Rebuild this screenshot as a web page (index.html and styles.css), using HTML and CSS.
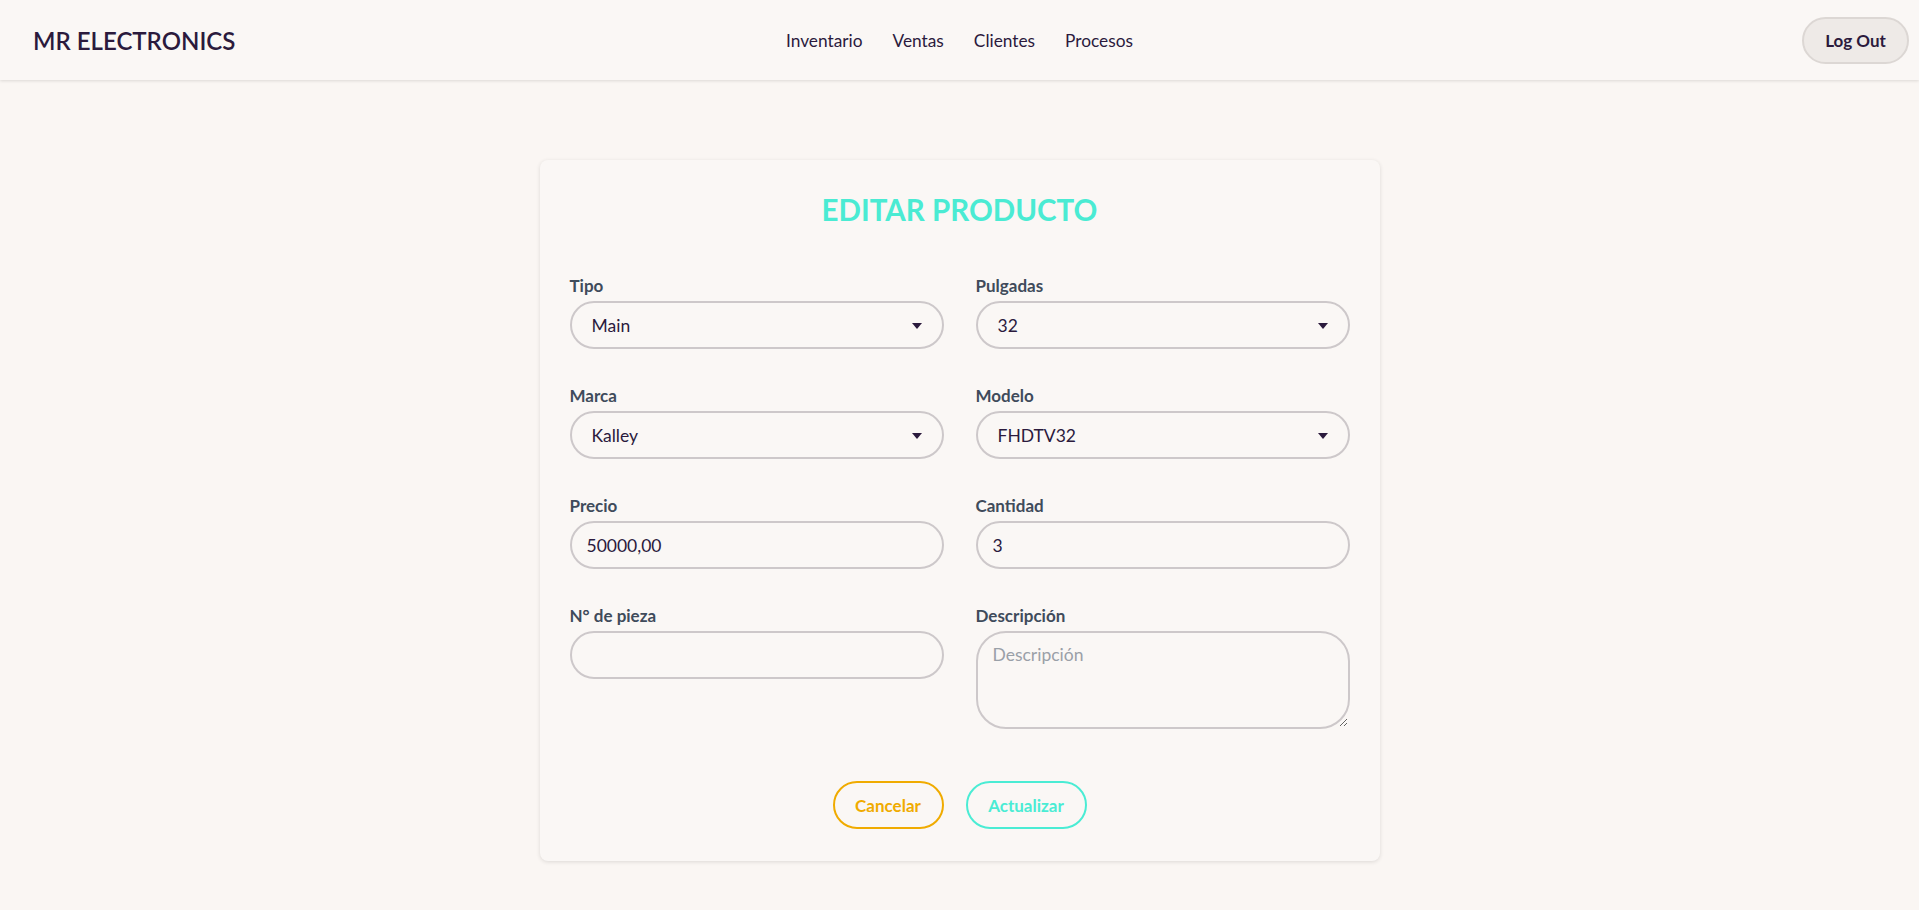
FILE: index.html
```html
<!DOCTYPE html>
<html lang="es">
<head>
<meta charset="utf-8">
<title>MR Electronics - Editar producto</title>
<link rel="stylesheet" href="styles.css">
</head>
<body>
<header class="navbar">
  <div class="brand">MR ELECTRONICS</div>
  <nav class="nav-links">
    <a href="#">Inventario</a>
    <a href="#">Ventas</a>
    <a href="#">Clientes</a>
    <a href="#">Procesos</a>
  </nav>
  <div class="nav-right"><button class="logout">Log Out</button></div>
</header>
<main class="page">
  <section class="card">
    <h1 class="title">EDITAR PRODUCTO</h1>
    <form class="form-grid">
      <div class="field">
        <label class="label">Tipo</label>
        <div class="select-wrap">
          <select class="control select"><option>Main</option></select>
          <svg class="caret" width="10" height="6" viewBox="0 0 10 6"><path d="M0 0h10L5 6z"/></svg>
        </div>
      </div>
      <div class="field">
        <label class="label">Pulgadas</label>
        <div class="select-wrap">
          <select class="control select"><option>32</option></select>
          <svg class="caret" width="10" height="6" viewBox="0 0 10 6"><path d="M0 0h10L5 6z"/></svg>
        </div>
      </div>
      <div class="field">
        <label class="label">Marca</label>
        <div class="select-wrap">
          <select class="control select"><option>Kalley</option></select>
          <svg class="caret" width="10" height="6" viewBox="0 0 10 6"><path d="M0 0h10L5 6z"/></svg>
        </div>
      </div>
      <div class="field">
        <label class="label">Modelo</label>
        <div class="select-wrap">
          <select class="control select"><option>FHDTV32</option></select>
          <svg class="caret" width="10" height="6" viewBox="0 0 10 6"><path d="M0 0h10L5 6z"/></svg>
        </div>
      </div>
      <div class="field">
        <label class="label">Precio</label>
        <input class="control" type="text" value="50000,00">
      </div>
      <div class="field">
        <label class="label">Cantidad</label>
        <input class="control" type="text" value="3">
      </div>
      <div class="field">
        <label class="label">N° de pieza</label>
        <input class="control" type="text" value="">
      </div>
      <div class="field">
        <label class="label">Descripción</label>
        <textarea class="control textarea" placeholder="Descripción"></textarea>
      </div>
    </form>
    <div class="actions">
      <button class="btn btn-cancel">Cancelar</button>
      <button class="btn btn-update">Actualizar</button>
    </div>
  </section>
</main>
</body>
</html>
```
FILE: styles.css
```css
* { box-sizing: border-box; }
html, body { margin: 0; padding: 0; }
body {
  background: #faf6f3;
  font-family: Lato, "Noto Sans", sans-serif;
  color: #2b1a3d;
  height: 910px;
  overflow: hidden;
}
.navbar {
  height: 80px;
  display: grid;
  grid-template-columns: 1fr auto 1fr;
  align-items: center;
  padding: 0 10px;
  background: #faf7f5;
  box-shadow: 0 1px 3px rgba(0,0,0,0.12);
  position: relative;
}
.brand {
  padding-left: 23px;
  font-size: 24px;
  font-weight: 600;
  color: #2b1a3d;
}
.nav-links {
  display: flex;
  gap: 30px;
}
.nav-links a {
  font-size: 17.3px;
  color: #2b1a3d;
  text-decoration: none;
}
.nav-right { display: flex; justify-content: flex-end; }
.logout {
  width: 107px;
  height: 47px;
  border-radius: 24px;
  background: #eeeae7;
  border: 2px solid #dcd7d4;
  font-family: inherit;
  font-size: 17px;
  font-weight: 700;
  color: #2b1a3d;
  cursor: pointer;
}
.page {
  display: flex;
  justify-content: center;
  padding-top: 80px;
}
.card {
  width: 840px;
  background: #faf7f5;
  border-radius: 8px;
  box-shadow: 0 1px 4px rgba(0,0,0,0.12);
  padding: 30px 30px 32px;
}
.title {
  margin: 2px 0 0;
  text-align: center;
  font-size: 29.5px;
  line-height: 36px;
  font-weight: 700;
  color: #4aebd3;
}
.form-grid {
  margin-top: 47px;
  display: grid;
  grid-template-columns: 374px 374px;
  column-gap: 32px;
  row-gap: 36px;
}
.field { display: flex; flex-direction: column; }
.label {
  font-size: 17px;
  line-height: 22px;
  font-weight: 700;
  color: #3f4b5b;
  margin-bottom: 4px;
}
.control {
  width: 100%;
  height: 48px;
  border: 2px solid #cdc8ca;
  border-radius: 24px;
  background: #faf7f5;
  font-family: inherit;
  font-size: 17.5px;
  color: #2b1a3d;
  padding: 0 15px;
  outline: none;
}
.select-wrap { position: relative; }
.select {
  appearance: none;
  -webkit-appearance: none;
  padding-left: 20px;
}
.caret {
  position: absolute;
  right: 22px;
  top: 22px;
  fill: #2b1a3d;
  pointer-events: none;
}
.textarea {
  height: 98px;
  border-radius: 30px;
  padding: 11px 15px;
  resize: vertical;
}
.textarea::placeholder { color: #9aa0a8; }
.actions {
  margin-top: 52px;
  display: flex;
  justify-content: center;
  gap: 22px;
}
.btn {
  height: 48px;
  padding: 0 16px;
  border-radius: 24px;
  background: transparent;
  font-family: inherit;
  font-size: 17px;
  font-weight: 700;
  cursor: pointer;
}
.btn-cancel { border: 2px solid #f0ab00; color: #f0ab00; width: 111px; }
.btn-update { border: 2px solid #4aecd4; color: #4aecd4; width: 121px; }
```
